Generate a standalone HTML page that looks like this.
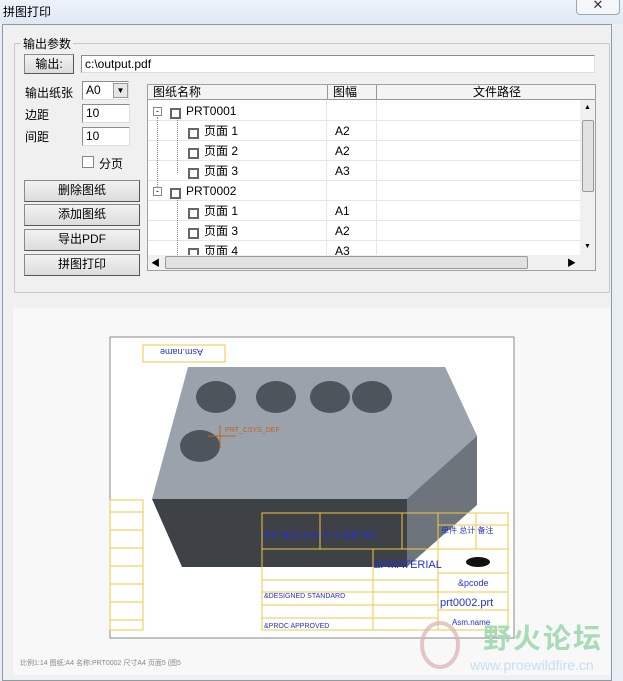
<!DOCTYPE html>
<html><head><meta charset="utf-8"><style>
*{margin:0;padding:0;box-sizing:border-box}
body{width:623px;height:681px;overflow:hidden;background:#e9eef5;font-family:"Liberation Sans","Noto Sans CJK SC",sans-serif;font-size:12px;color:#000;position:relative}
.a{position:absolute}
.btn{position:absolute;background:linear-gradient(#f2f2f2,#dcdcdc);border:1px solid #8a8a8a;border-right-color:#555;border-bottom-color:#555;text-align:center;line-height:19px;font-size:12px}
.fld{position:absolute;background:#fff;border:1px solid #8d8d8d;border-right-color:#ddd;border-bottom-color:#ddd;padding-left:3px;line-height:16px;font-size:12px}
.row{position:absolute;left:148px;width:432px;height:20px;border-bottom:1px solid #e6e6e6}
.cb{position:absolute;width:11px;height:11px;border:2px solid #666;background:#fff}
.t{position:absolute;font-size:12px;line-height:14px}
</style></head><body>
<div class="a" style="left:0;top:0;width:623px;height:24px;background:linear-gradient(#eef3fa,#dfe8f3)"></div>
<div class="a" style="left:3px;top:3px;font-size:12px">拼图打印</div>
<div class="a" style="left:576px;top:-2px;width:44px;height:17px;border:1px solid #9aa;border-top:none;border-radius:0 0 4px 4px;background:#f4f6f9;text-align:center;font-size:13px;line-height:14px;color:#333">✕</div>
<div class="a" style="left:2px;top:24px;width:610px;height:657px;background:#f0f0f0;border:1px solid #8f9aa5"></div>
<div class="a" style="left:14px;top:43px;width:596px;height:250px;border:1px solid #c8c8c8;border-radius:2px"></div>
<div class="a" style="left:21px;top:35px;background:#f0f0f0;padding:0 2px">输出参数</div>
<div class="btn" style="left:24px;top:54px;width:50px;height:20px">输出:</div>
<div class="fld" style="left:81px;top:55px;width:514px;height:18px">c:\output.pdf</div>
<div class="a" style="left:25px;top:84px">输出纸张</div>
<div class="fld" style="left:82px;top:81px;width:47px;height:19px">A0</div>
<div class="a" style="left:113px;top:83px;width:15px;height:15px;background:#e6e6e6;border:1px solid #999;font-size:8px;text-align:center;line-height:14px">▼</div>
<div class="a" style="left:25px;top:106px">边距</div>
<div class="fld" style="left:82px;top:104px;width:48px;height:19px">10</div>
<div class="a" style="left:25px;top:128px">间距</div>
<div class="fld" style="left:82px;top:127px;width:48px;height:19px">10</div>
<div class="a" style="left:82px;top:156px;width:12px;height:12px;background:#fff;border:1px solid #888"></div>
<div class="a" style="left:99px;top:155px">分页</div>
<div class="btn" style="left:24px;top:180px;width:116px;height:22px">删除图纸</div>
<div class="btn" style="left:24px;top:204px;width:116px;height:22px">添加图纸</div>
<div class="btn" style="left:24px;top:229px;width:116px;height:22px">导出PDF</div>
<div class="btn" style="left:24px;top:254px;width:116px;height:22px">拼图打印</div>
<div class="a" style="left:147px;top:84px;width:449px;height:187px;background:#fff;border:1px solid #a0a0a0"></div>
<div class="a" style="left:148px;top:85px;width:447px;height:15px;background:#f4f4f4;border-bottom:1px solid #999"></div>
<div class="a" style="left:327px;top:85px;width:1px;height:15px;background:#999"></div>
<div class="a" style="left:376px;top:85px;width:1px;height:15px;background:#999"></div>
<div class="a" style="left:153px;top:85px;line-height:15px">图纸名称</div>
<div class="a" style="left:333px;top:85px;line-height:15px">图幅</div>
<div class="a" style="left:473px;top:85px;line-height:15px">文件路径</div>
<div class="a" style="left:326px;top:100px;width:1px;height:155px;background:#e6e6e6"></div>
<div class="a" style="left:376px;top:100px;width:1px;height:155px;background:#e6e6e6"></div>
<div class="row" style="top:101px"></div><div class="row" style="top:121px"></div><div class="row" style="top:141px"></div><div class="row" style="top:161px"></div><div class="row" style="top:181px"></div><div class="row" style="top:201px"></div><div class="row" style="top:221px"></div>
<div class="a" style="left:157px;top:117px;height:72px;border-left:1px dotted #888"></div>
<div class="a" style="left:177px;top:117px;height:56px;border-left:1px dotted #888"></div>
<div class="a" style="left:177px;top:197px;height:58px;border-left:1px dotted #888"></div>
<div class="a" style="left:153px;top:107px;width:9px;height:9px;border:1px solid #888;background:#fff;font-size:9px;line-height:6px;text-align:center">-</div>
<div class="a" style="left:153px;top:187px;width:9px;height:9px;border:1px solid #888;background:#fff;font-size:9px;line-height:6px;text-align:center">-</div>
<div class="cb" style="left:170px;top:108px"></div><div class="t" style="left:186px;top:104px">PRT0001</div>
<div class="cb" style="left:188px;top:128px"></div><div class="t" style="left:204px;top:124px">页面 1</div><div class="t" style="left:335px;top:124px">A2</div>
<div class="cb" style="left:188px;top:148px"></div><div class="t" style="left:204px;top:144px">页面 2</div><div class="t" style="left:335px;top:144px">A2</div>
<div class="cb" style="left:188px;top:168px"></div><div class="t" style="left:204px;top:164px">页面 3</div><div class="t" style="left:335px;top:164px">A3</div>
<div class="cb" style="left:170px;top:188px"></div><div class="t" style="left:186px;top:184px">PRT0002</div>
<div class="cb" style="left:188px;top:208px"></div><div class="t" style="left:204px;top:204px">页面 1</div><div class="t" style="left:335px;top:204px">A1</div>
<div class="cb" style="left:188px;top:228px"></div><div class="t" style="left:204px;top:224px">页面 3</div><div class="t" style="left:335px;top:224px">A2</div>
<div class="a" style="left:148px;top:241px;width:432px;height:14px;overflow:hidden"><div class="cb" style="left:40px;top:7px"></div><div class="t" style="left:56px;top:3px">页面 4</div><div class="t" style="left:187px;top:3px">A3</div></div>
<div class="a" style="left:580px;top:100px;width:15px;height:155px;background:#f0f0f0"></div>
<div class="a" style="left:582px;top:120px;width:12px;height:72px;background:#e2e2e2;border:1px solid #999;border-radius:2px"></div>
<div class="a" style="left:584px;top:104px;font-size:7px">▲</div><div class="a" style="left:584px;top:243px;font-size:7px">▼</div>
<div class="a" style="left:148px;top:255px;width:447px;height:15px;background:#f0f0f0"></div>
<div class="a" style="left:165px;top:256px;width:363px;height:13px;background:#e2e2e2;border:1px solid #999;border-radius:2px"></div>
<div class="a" style="left:151px;top:256px;font-size:9px">◀</div><div class="a" style="left:567px;top:256px;font-size:9px">▶</div>
<div class="a" style="left:13px;top:308px;width:597px;height:367px;background:#f8f8f8"></div>
<svg class="a" style="left:0;top:0" width="623" height="681">
<rect x="110" y="337" width="404" height="301" fill="#fff" stroke="#888"/>
<rect x="143" y="345" width="82" height="17" fill="none" stroke="#f0c840"/>
<text x="165" y="357" font-size="9" fill="#2233cc" transform="rotate(180 184 353)">Asm.name</text>
<polygon points="445,367 477,436 477,505 407,567 407,499" fill="#6e747b"/>
<polygon points="152,499 407,499 407,567 182,567" fill="#3e4146"/>
<polygon points="188,367 445,367 477,436 407,499 152,499" fill="#9aa3ac"/>
<g fill="#4e545c"><ellipse cx="216" cy="397" rx="20" ry="16"/><ellipse cx="276" cy="397" rx="20" ry="16"/><ellipse cx="330" cy="397" rx="20" ry="16"/><ellipse cx="372" cy="397" rx="20" ry="16"/><ellipse cx="200" cy="446" rx="20" ry="16"/></g>
<text x="225" y="432" font-size="7" fill="#c06020">PRT_CSYS_DEF</text>
<line x1="208" y1="436" x2="236" y2="436" stroke="#c06020"/><line x1="220" y1="425" x2="220" y2="448" stroke="#c06020"/>
<g fill="none" stroke="#f0c840"><rect x="110" y="500" width="33" height="130"/>
<line x1="110" y1="512" x2="143" y2="512"/><line x1="110" y1="530" x2="143" y2="530"/><line x1="110" y1="548" x2="143" y2="548"/><line x1="110" y1="566" x2="143" y2="566"/><line x1="110" y1="584" x2="143" y2="584"/><line x1="110" y1="602" x2="143" y2="602"/><line x1="110" y1="620" x2="143" y2="620"/>
<rect x="262" y="513" width="246" height="117"/><line x1="262" y1="549" x2="508" y2="549"/><line x1="262" y1="580" x2="438" y2="580"/><line x1="262" y1="592" x2="438" y2="592"/><line x1="262" y1="605" x2="438" y2="605"/><line x1="262" y1="618" x2="438" y2="618"/><line x1="438" y1="525" x2="508" y2="525"/><line x1="438" y1="573" x2="508" y2="573"/><line x1="438" y1="592" x2="508" y2="592"/><line x1="438" y1="610" x2="508" y2="610"/>
<line x1="438" y1="513" x2="438" y2="630"/><line x1="373" y1="549" x2="373" y2="630"/><line x1="320" y1="513" x2="320" y2="549"/><line x1="402" y1="513" x2="402" y2="549"/><line x1="476" y1="513" x2="476" y2="549"/></g>
<g font-size="8" fill="#2233cc"><text x="263" y="538">序号 编 码 名 称 代 号 数量 材料</text><text x="441" y="533">单件 总计 备注</text><text x="373" y="568" font-size="11">&amp;PMATERIAL</text><text x="458" y="586" font-size="9">&amp;pcode</text><text x="440" y="606" font-size="11">prt0002.prt</text><text x="452" y="625" font-size="8">Asm.name</text><text x="264" y="598" font-size="7">&amp;DESIGNED  STANDARD</text><text x="264" y="628" font-size="7">&amp;PROC  APPROVED</text></g>
<ellipse cx="478" cy="562" rx="12" ry="5" fill="#111"/>
<ellipse cx="440" cy="645" rx="18" ry="22" fill="none" stroke="#d8b0b0" stroke-width="4" opacity=".7"/>
<g font-size="7" fill="#888"><text x="20" y="665">比例1:14  图纸:A4  名称:PRT0002  尺寸A4  页面5 (图5</text></g>
</svg>
<div class="a" style="left:483px;top:617px;font-size:28px;font-weight:bold;color:#a8dcb8;letter-spacing:2px">野火论坛</div>
<div class="a" style="left:470px;top:657px;font-size:14px;color:#c4dff0">www.proewildfire.cn</div>
</body></html>
